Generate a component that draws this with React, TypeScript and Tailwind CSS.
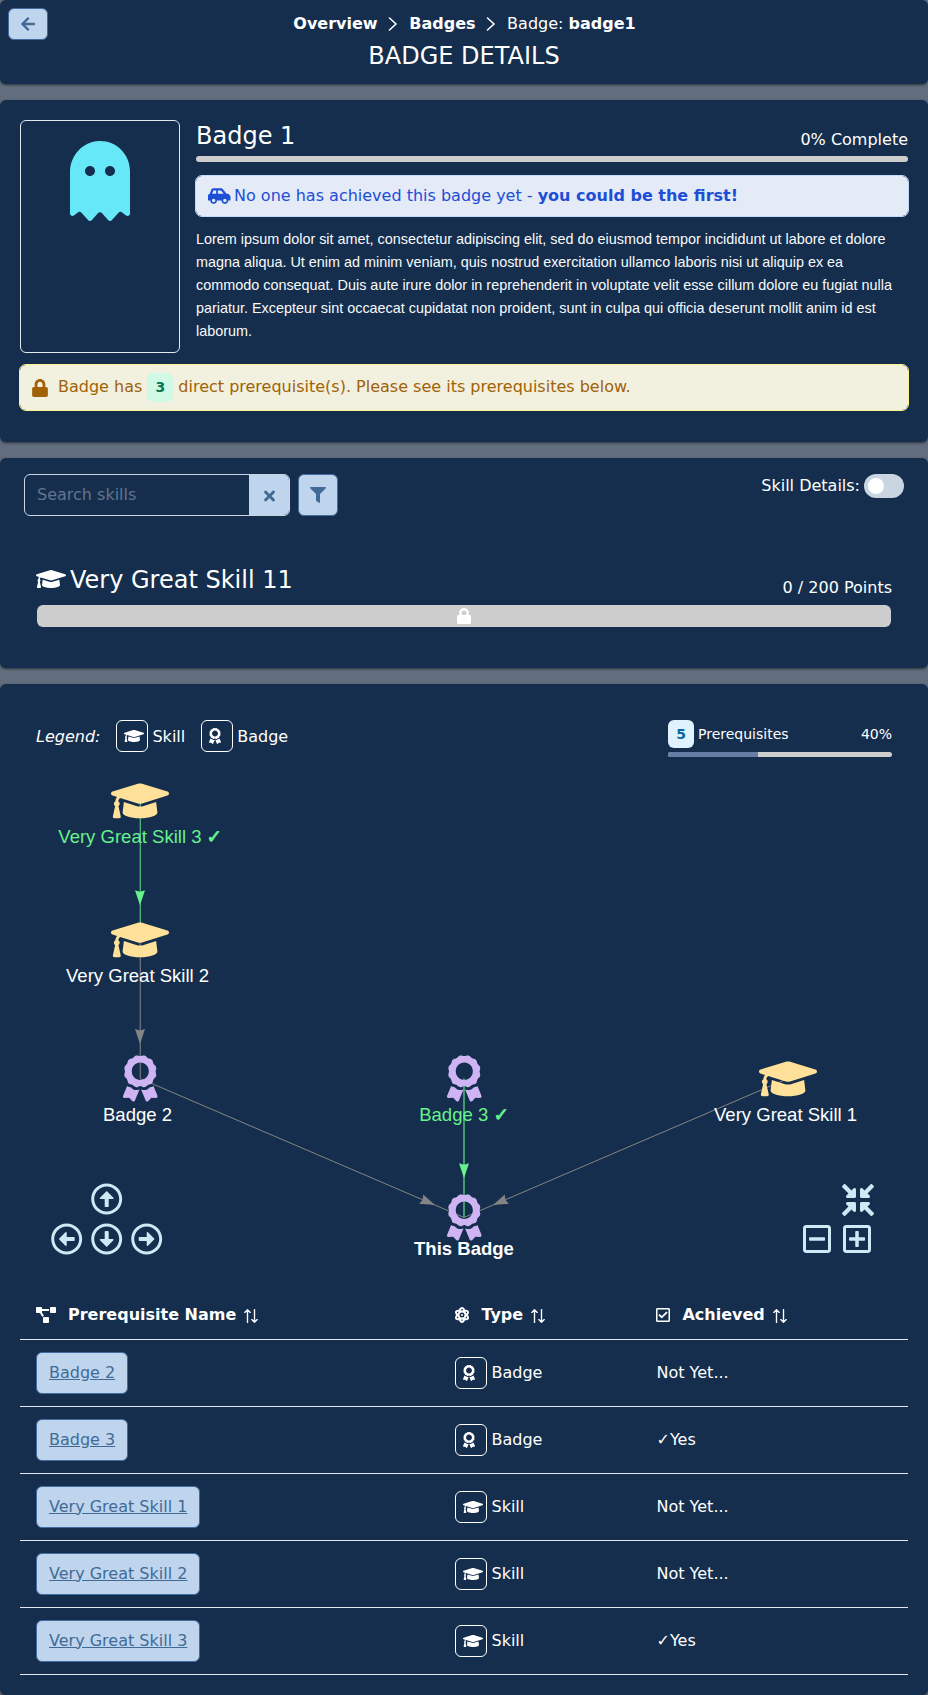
import React from 'react';
import {
  FaArrowLeft, FaAtom, FaAward, FaCarSide, FaCompressArrowsAlt, FaFilter, FaGhost, FaGraduationCap, FaLock,
  FaProjectDiagram, FaRegArrowAltCircleDown, FaRegArrowAltCircleLeft, FaRegArrowAltCircleRight,
  FaRegArrowAltCircleUp, FaRegCheckSquare, FaRegMinusSquare, FaRegPlusSquare, FaTimes,
} from 'react-icons/fa';

const GREEN = '#67f28c';
const GRAY = '#848484';

function Card({ className, children }: { className: string; children: React.ReactNode }) {
  return (
    <section className={`rounded-md bg-[#152e4d] shadow-[0_1px_3px_rgba(0,0,0,0.3),0_1px_2px_rgba(0,0,0,0.3)] ${className}`}>
      {children}
    </section>
  );
}

function Chevron() {
  return (
    <svg width="10" height="14" viewBox="0 0 10 14" fill="none" stroke="currentColor" strokeWidth="1.5" strokeLinecap="round">
      <path d="M1.5 1l6.5 6L1.5 13" />
    </svg>
  );
}

function SortIcon() {
  return (
    <svg width="14" height="14" viewBox="0 0 14 14" fill="none" stroke="currentColor" strokeWidth="1.35" strokeLinecap="round" strokeLinejoin="round">
      <path d="M3.5 13.4V.8M.8 3.4L3.5.7l2.7 2.7M10.5.6v12.6M7.8 10.6l2.7 2.7 2.7-2.7" />
    </svg>
  );
}

function TypeTag({ type, labelClass = '' }: { type: string; labelClass?: string }) {
  return (
    <div className="flex items-center gap-1">
      <span className="flex h-8 w-8 items-center rounded-md border border-white pl-[7px]">
        {type === 'Skill' ? <FaGraduationCap className="h-4 w-5 shrink-0" /> : <FaAward className="h-4 w-3 shrink-0" />}
      </span>
      <span className={labelClass}>{type}</span>
    </div>
  );
}

function Arrow({ x, y, angle, color }: { x: number; y: number; angle: number; color: string }) {
  return <path d="M0 0L-15 5L-13.5 0L-15 -5Z" fill={color} transform={`translate(${x} ${y}) rotate(${angle})`} />;
}

function Check() {
  return (
    <tspan fontFamily="'DejaVu Sans', sans-serif" fontSize="18.5" fontWeight="bold" stroke={GREEN} strokeWidth="0.8">✓</tspan>
  );
}

function Graph() {
  const caps = [[140, 800.8], [140, 939.8], [788, 1078.8]];
  const awards = [[140.3, 1078.5], [464.3, 1078.5], [464.3, 1217.5]];
  return (
    <svg className="block" width="928" height="509" viewBox="0 764 928 509" fontFamily="'Liberation Sans', Arial, sans-serif" fontSize="18.55">
      <g strokeWidth="1" fill="none">
        <path d="M140.3 800.5V939.5" stroke={GREEN} strokeOpacity="0.7" strokeWidth="1.3" />
        <path d="M140.3 939.5V1078.5" stroke={GRAY} strokeOpacity="0.8" strokeWidth="1.3" />
        <path d="M464 1078.5V1217.5" stroke={GREEN} strokeOpacity="0.7" strokeWidth="1.6" />
        <path d="M140 1078.5L464 1217.5M788 1078.5L464 1217.5" stroke={GRAY} />
      </g>
      <Arrow x={140} y={905.3} angle={90} color={GREEN} />
      <Arrow x={140} y={1044} angle={90} color={GRAY} />
      <Arrow x={464} y={1178.3} angle={90} color={GREEN} />
      <Arrow x={435} y={1205} angle={23.2} color={GRAY} />
      <Arrow x={493} y={1205} angle={156.8} color={GRAY} />
      {caps.map(([x, y]) => (
        <FaGraduationCap key={`${x}-${y}`} x={x - 29} y={y - 23.2} className="h-[46.4px] w-[58px]" color="#ffe199" />
      ))}
      {awards.map(([x, y]) => (
        <FaAward key={`${x}-${y}`} x={x - 17.4} y={y - 23.2} className="h-[46.4px] w-[34.8px]" color="#cfb4f4" />
      ))}
      <text x="58.3" y="843" fill={GREEN}>Very Great Skill 3 <Check /></text>
      <text x="66" y="982" fill="#fff">Very Great Skill 2</text>
      <text x="103" y="1121" fill="#fff">Badge 2</text>
      <text x="419.2" y="1121" fill={GREEN}>Badge 3 <Check /></text>
      <text x="714" y="1121" fill="#fff">Very Great Skill 1</text>
      <text x="414" y="1255" fill="#fff" fontWeight="bold">This Badge</text>
      <g color="#cce9f5">
        <FaRegArrowAltCircleUp x={90.7} y={1183} className="h-8 w-8" />
        <FaRegArrowAltCircleLeft x={50.7} y={1223} className="h-8 w-8" />
        <FaRegArrowAltCircleDown x={90.7} y={1223} className="h-8 w-8" />
        <FaRegArrowAltCircleRight x={130.7} y={1223} className="h-8 w-8" />
        <FaCompressArrowsAlt x={842} y={1184} className="h-8 w-8" />
        <FaRegMinusSquare x={803} y={1223} className="h-8 w-7" />
        <FaRegPlusSquare x={843} y={1223} className="h-8 w-7" />
      </g>
    </svg>
  );
}

const columns = [
  { title: 'Prerequisite Name', icon: <FaProjectDiagram className="mr-3 h-4 w-5" /> },
  { title: 'Type', icon: <FaAtom className="mr-3 h-4 w-3.5" /> },
  { title: 'Achieved', icon: <FaRegCheckSquare className="mr-3 h-4 w-3.5" /> },
];

const rows = [
  { name: 'Badge 2', type: 'Badge', achieved: false },
  { name: 'Badge 3', type: 'Badge', achieved: true },
  { name: 'Very Great Skill 1', type: 'Skill', achieved: false },
  { name: 'Very Great Skill 2', type: 'Skill', achieved: false },
  { name: 'Very Great Skill 3', type: 'Skill', achieved: true },
];

export default function App() {
  return (
    <main className="flex min-h-[1695px] w-[928px] flex-col gap-4 bg-[#626d7d] font-['DejaVu_Sans',sans-serif] text-base text-white">
      <Card className="relative h-[84px]">
        <button className="absolute top-2 left-2 flex h-8 w-[39.5px] items-center justify-center rounded-md border border-[#3f6d9f] bg-[#bfd5ee] text-[#416b96]">
          <FaArrowLeft className="h-4 w-3.5" />
        </button>
        <div className="flex items-center justify-center gap-[10.8px] pt-3 pl-px leading-6">
          <b>Overview</b><Chevron /><b>Badges</b><Chevron /><span>Badge: <b>badge1</b></span>
        </div>
        <h1 className="mt-[2px] text-center text-2xl leading-9">BADGE DETAILS</h1>
      </Card>

      <Card className="h-[342px] p-5">
        <div className="flex gap-4">
          <div className="flex h-[233px] w-40 shrink-0 justify-center rounded-md border border-slate-200 pt-5">
            <FaGhost className="h-20 w-[60px] text-[#67e8f9]" />
          </div>
          <div className="flex-1">
            <div className="flex h-9 items-end justify-between">
              <h2 className="text-2xl leading-10">Badge 1</h2>
              <span className="leading-8">0% Complete</span>
            </div>
            <div className="h-1.5 rounded-md bg-[#cdcdcd]" />
            <div className="mt-[14px] flex h-10 items-center rounded-md bg-[#e4eaf6] pl-3 text-[#1d4ed8] outline outline-[#bfdbfe]">
              <FaCarSide className="mr-[3.5px] h-[18px] w-[22.5px]" />
              <span className="leading-6">No one has achieved this badge yet - <b>you could be the first!</b></span>
            </div>
            <p className="mt-3 w-[705px] font-['Liberation_Sans',Arial,sans-serif] text-[14.4px] leading-[23px] text-slate-50">
              Lorem ipsum dolor sit amet, consectetur adipiscing elit, sed do eiusmod tempor incididunt ut labore et dolore magna aliqua. Ut enim ad minim veniam, quis nostrud exercitation ullamco laboris nisi ut aliquip ex ea commodo consequat. Duis aute irure dolor in reprehenderit in voluptate velit esse cillum dolore eu fugiat nulla pariatur. Excepteur sint occaecat cupidatat non proident, sunt in culpa qui officia deserunt mollit anim id est laborum.
            </p>
          </div>
        </div>
        <div className="mt-3 flex h-[45px] items-center rounded-md bg-[#f2f0de] pl-3 text-[#a16207] outline outline-[#fef08a]">
          <FaLock className="mt-px mr-[10px] h-[18px] w-4" />
          <span className="pb-0.5">Badge has</span>
          <span className="mx-[5px] flex h-[29px] w-[26px] items-center justify-center rounded-md bg-[#d0fae5] pb-px text-sm font-bold text-[#047857]">3</span>
          <span className="pb-0.5">direct prerequisite(s). Please see its prerequisites below.</span>
        </div>
      </Card>

      <Card className="h-[210px] px-6 pt-4">
        <div className="flex items-start">
          <div className="flex h-[42px] w-[266px] overflow-hidden rounded-md border border-slate-300">
            <span className="flex-1 pl-3 leading-10 text-[#64748b]">Search skills</span>
            <button className="flex w-10 items-center justify-center bg-[#bfd5ee] pt-[2px] text-[#416b96]">
              <FaTimes className="h-4 w-[11px]" />
            </button>
          </div>
          <button className="ml-2 flex h-[42px] w-10 items-center justify-center rounded-md border border-[#3f6d9f] bg-[#bfd5ee] text-[#416b96]">
            <FaFilter className="h-4 w-4" />
          </button>
          <span className="ml-auto leading-[23px]">Skill Details:</span>
          <span className="ml-1 flex h-6 w-10 items-center rounded-full bg-slate-300 pl-1">
            <span className="h-4 w-4 rounded-full bg-white" />
          </span>
        </div>
        <div className="mt-[46px] flex h-[43px] items-start justify-between px-3">
          <div className="flex items-center gap-1 text-2xl leading-9">
            <FaGraduationCap className="mb-[2px] h-6 w-[30px]" />
            <span>Very Great Skill 11</span>
          </div>
          <span className="pt-[14px] leading-6">0 / 200 Points</span>
        </div>
        <div className="mx-[13px] flex h-[22px] items-center justify-center rounded-md bg-[#cdcdcd]">
          <FaLock className="h-4 w-3.5" />
        </div>
      </Card>

      <Card className="h-[1011px]">
        <div className="flex h-20 items-start px-9 pt-9">
          <i className="mr-4 leading-[33px]">Legend:</i>
          <TypeTag type="Skill" labelClass="pt-px" />
          <div className="w-4" />
          <TypeTag type="Badge" labelClass="pt-px" />
          <div className="ml-auto w-56 text-sm">
            <div className="flex h-7 items-center">
              <span className="mr-1 flex h-7 w-[26px] items-center justify-center rounded-md bg-[#e0f2fe] font-bold text-[#0369a1]">5</span>
              <span>Prerequisites</span>
              <span className="ml-auto">40%</span>
            </div>
            <div className="mt-1 h-[5px] overflow-hidden rounded-md bg-[#cdcdcd]">
              <div className="h-full w-2/5 bg-[#667da4]" />
            </div>
          </div>
        </div>
        <Graph />
        <table className="mx-5 w-[888px] table-fixed border-collapse">
          <colgroup>
            <col className="w-[419px]" />
            <col className="w-[201px]" />
            <col />
          </colgroup>
          <thead>
            <tr className="h-[66px] border-b border-slate-200 text-left">
              {columns.map((c, i) => (
                <th key={c.title} className={i === 0 ? 'py-0 pr-0 pl-4' : 'py-0 pr-0 pl-[16.4px]'}>
                  <span className="flex items-center pt-[18px]">{c.icon}{c.title}<span className="mt-[2px] ml-2"><SortIcon /></span></span>
                </th>
              ))}
            </tr>
          </thead>
          <tbody>
            {rows.map((r) => (
              <tr key={r.name} className="h-[67px] border-b border-slate-200">
                <td className="py-0 pr-0 pl-4">
                  <a className="inline-flex h-[42px] items-center rounded-md border border-[#3f6d9f] bg-[#bfd5ee] px-3 align-middle text-[#416b96] underline">{r.name}</a>
                </td>
                <td className="py-0 pr-0 pl-4"><TypeTag type={r.type} labelClass="pl-[0.5px]" /></td>
                <td className="py-0 pr-0 pl-[16.5px]">{r.achieved ? '✓Yes' : 'Not Yet...'}</td>
              </tr>
            ))}
          </tbody>
        </table>
      </Card>
    </main>
  );
}
